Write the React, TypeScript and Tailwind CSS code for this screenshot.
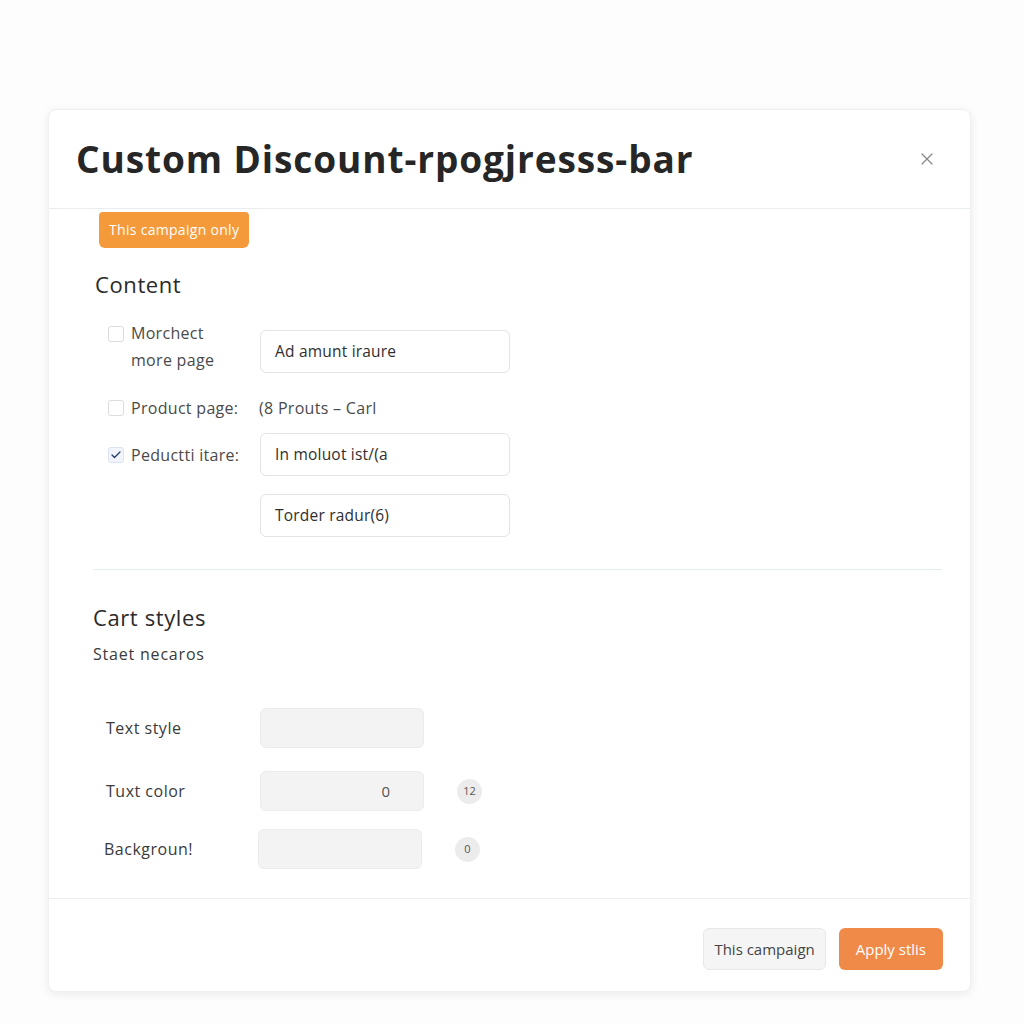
import React from 'react';
import { X, Check } from 'lucide-react';

const font = { fontFamily: '"Open Sans", "DejaVu Sans", sans-serif' };

const Checkbox: React.FC<{ checked?: boolean }> = ({ checked }) => (
  <span
    className={`w-4 h-4 rounded-[3px] border flex items-center justify-center flex-shrink-0 ${
      checked ? 'border-[#dbe3ee] bg-[#f1f5fb]' : 'border-[#dcdcdc] bg-white'
    }`}
  >
    {checked && <Check size={12} strokeWidth={2.5} className="text-[#1f3b63]" />}
  </span>
);

const TextInput: React.FC<{ value: string }> = ({ value }) => (
  <div className="w-[250px] h-[43px] rounded-md border border-[#e3e3e3] bg-white flex items-center px-[14px] text-[15.5px] tracking-[0.2px] text-[#2f2f2f]">
    {value}
  </div>
);

const StyleRow: React.FC<{ label: string; value?: string; chip?: string; className?: string }> = ({
  label,
  value,
  chip,
  className = '',
}) => (
  <div className={`flex items-center ${className}`}>
    <span className="w-[154px] text-[16px] tracking-[0.5px] text-[#3a3a3a]">{label}</span>
    <div className="w-[164px] h-[40px] rounded-md bg-[#f3f3f3] border border-[#ececec] flex items-center justify-end pr-[33px] text-[15px] text-[#555]">
      {value}
    </div>
    {chip && (
      <span className="ml-[33px] w-[25px] h-[25px] rounded-full bg-[#ececec] flex items-center justify-center text-[11px] text-[#555]">
        {chip}
      </span>
    )}
  </div>
);

export default function App() {
  return (
    <div className="min-h-screen bg-[#fdfdfd] pt-[109px] pl-[48px]" style={font}>
      <div className="w-[923px] h-[883px] bg-white rounded-lg shadow-[0_2px_10px_rgba(0,0,0,0.08)] border border-[#f0f0f0] flex flex-col">
        {/* Header */}
        <div className="h-[99px] flex items-center justify-between pl-[27px] pr-[33px] border-b border-[#e8eef0] flex-shrink-0">
          <h1 className="text-[37px] font-bold text-[#262626] tracking-[0.9px]">
            Custom Discount-rpogjresss-bar
          </h1>
          <X size={20} strokeWidth={1.5} className="text-[#8a8a8a]" />
        </div>

        {/* Body */}
        <div className="flex-1 pl-[44px] pr-[28px]">
          <span className="inline-block ml-[6px] mt-[3px] px-[10px] h-[36px] leading-[36px] rounded-b-md rounded-t-sm bg-[#f49a3a] text-white text-[14px] tracking-[0.3px]">
            This campaign only
          </span>

          <h2 className="mt-[20px] ml-[2px] text-[22px] tracking-[0.6px] text-[#2a2a2a]">Content</h2>

          {/* Content options */}
          <div className="ml-[15px] mt-[24px] text-[16px] tracking-[0.3px] text-[#4a4a4a]">
            <div className="flex items-start">
              <div className="w-[152px] flex items-start gap-[7px] pt-[1px]">
                <Checkbox />
                <span className="leading-[27px] -mt-[6px]">
                  Morchect
                  <br />
                  more page
                </span>
              </div>
              <div className="mt-[5px]">
                <TextInput value="Ad amunt iraure" />
              </div>
            </div>

            <div className="flex items-center mt-[22px]">
              <div className="w-[151px] flex items-center gap-[7px]">
                <Checkbox />
                <span>Product page:</span>
              </div>
              <span>(8 Prouts – Carl</span>
            </div>

            <div className="flex items-center mt-[13px]">
              <div className="w-[152px] flex items-center gap-[7px]">
                <Checkbox checked />
                <span>Peductti itare:</span>
              </div>
              <TextInput value="In moluot ist/(a" />
            </div>

            <div className="ml-[152px] mt-[18px]">
              <TextInput value="Torder radur(6)" />
            </div>
          </div>

          <div className="mt-[32px] border-t border-[#e3ecee]" />

          {/* Cart styles */}
          <h2 className="mt-[31px] text-[22px] tracking-[0.6px] text-[#2a2a2a]">Cart styles</h2>
          <p className="mt-[8px] text-[16px] tracking-[0.8px] text-[#3a3a3a]">Staet necaros</p>

          <div className="ml-[13px] mt-[42px]">
            <StyleRow label="Text style" />
            <StyleRow label="Tuxt color" value="0" chip="12" className="mt-[23px]" />
            <StyleRow label="Backgroun!" chip="0" className="mt-[18px] -ml-[2px]" />
          </div>
        </div>

        {/* Footer */}
        <div className="h-[93px] border-t border-[#eeeeee] flex items-start justify-end gap-[13px] pt-[29px] pr-[27px] flex-shrink-0">
          <button className="h-[42px] px-[10px] rounded-md bg-[#f5f5f5] border border-[#e8e8e8] text-[15px] text-[#444]">
            This campaign
          </button>
          <button className="h-[42px] px-[17px] rounded-md bg-[#f08a48] text-[15px] text-white">
            Apply stlis
          </button>
        </div>
      </div>
    </div>
  );
}
